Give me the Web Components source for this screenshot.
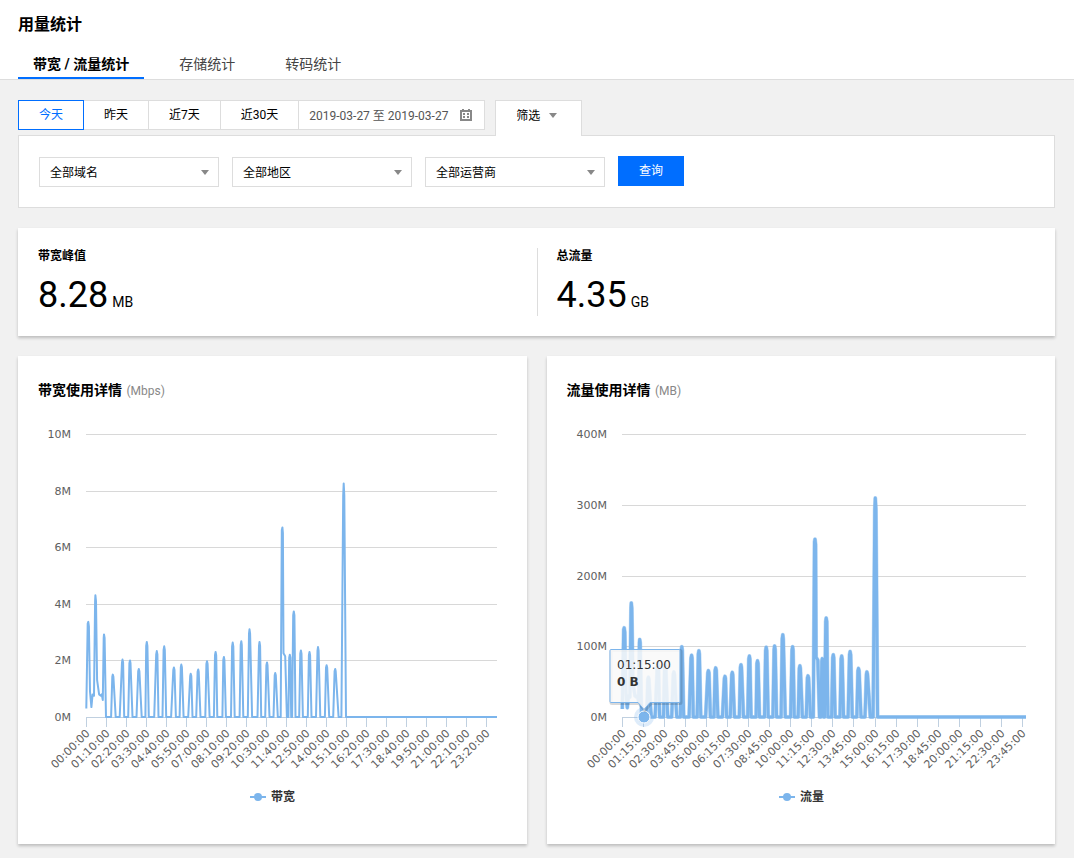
<!DOCTYPE html>
<html lang="zh-CN">
<head>
<meta charset="utf-8">
<meta name="viewport" content="width=device-width, initial-scale=1">
<title>用量统计</title>
<style>
  body {
    margin: 0;
    background: #f1f1f1;
    color: #000;
    font: 12px/20px Roboto, "Noto Sans CJK SC", sans-serif;
  }
</style>
</head>
<body>
<usage-page></usage-page>

<script>
const define = (name, html, setup) => {
  const template = document.createElement('template');
  template.innerHTML = html;
  customElements.define(name, class extends HTMLElement {
    connectedCallback() {
      if (this.shadowRoot) return;
      this.attachShadow({ mode: 'open' }).append(template.content.cloneNode(true));
      if (setup) setup(this, this.shadowRoot);
    }
  });
};

define('page-header', `
  <style>
    :host { display: block; background: #fff; border-bottom: 1px solid #ddd; padding: 13px 18px 0; }
    h1 { margin: 0 0 12px; font-size: 16px; line-height: 24px; font-weight: 700; }
    nav { display: flex; gap: 20px; }
  </style>
  <h1><slot name="title"></slot></h1>
  <nav><slot></slot></nav>
`);

define('nav-tab', `
  <style>
    :host { display: block; }
    a { display: block; box-sizing: border-box; height: 30px; padding: 0 15px; font-size: 14px; line-height: 30px;
        color: #444; text-decoration: none; white-space: nowrap; }
    :host([active]) a { color: #000; font-weight: 700; border-bottom: 2px solid #006eff; }
  </style>
  <a href="#"><slot></slot></a>
`);

define('range-button', `
  <style>
    :host { display: block; }
    button { height: 30px; padding: 0 20px; border: 1px solid #ddd; border-left-width: 0; background: #fff;
             color: #000; font: inherit; white-space: nowrap; display: block; }
    :host([active]) button { border: 1px solid #006eff; color: #006eff; }
  </style>
  <button type="button"><slot></slot></button>
`);

define('date-range', `
  <style>
    :host { display: block; }
    label { display: flex; align-items: center; box-sizing: border-box; width: 186px; height: 30px;
            padding: 0 12px 0 10px; border: 1px solid #ddd; border-left: 0; background: #fff; }
    input { flex: 1; min-width: 0; height: 28px; box-sizing: border-box; padding: 0 0 2px; border: 0; outline: 0; background: none; color: #555; font: inherit; }
    svg { flex: none; display: block; }
  </style>
  <label>
    <input type="text" readonly aria-label="日期范围" value="2019-03-27 至 2019-03-27">
    <svg width="12" height="12" viewBox="0 0 12 12" fill="#888" aria-hidden="true">
      <path fill-rule="evenodd" d="M0 1H2V0H4V1H8V0H10V1H12V12H0ZM2 3V10H10V3Z"/>
      <path d="M3 4h2v2H3zM7 4h2v2H7zM3 7h2v2H3zM7 7h2v2H7z"/>
    </svg>
  </label>
`);

define('filter-tab', `
  <style>
    :host { display: block; position: relative; z-index: 1; }
    button { display: flex; align-items: center; gap: 9px; box-sizing: border-box; width: 87px; height: 36px;
             padding: 0 0 6px 20px; border: 1px solid #ddd; border-bottom: 0; background: #fff; color: #000; font: inherit; }
    svg { display: block; }
  </style>
  <button type="button" aria-expanded="true"><slot></slot>
    <svg width="8" height="5" viewBox="0 0 8 5" aria-hidden="true"><path d="M0 0h8L4 5z" fill="#888"/></svg>
  </button>
`);

define('select-box', `
  <style>
    :host { display: block; position: relative; flex: 0 1 180px; }
    select { appearance: none; display: block; box-sizing: border-box; width: 100%; height: 30px; padding: 2px 24px 0 10px;
             border: 1px solid #ddd; border-radius: 0; background: #fff; color: #000; font: inherit; }
    svg { position: absolute; right: 10px; top: 13px; pointer-events: none; }
  </style>
  <select><option></option></select>
  <svg width="8" height="5" viewBox="0 0 8 5" aria-hidden="true"><path d="M0 0h8L4 5z" fill="#888"/></svg>
`, (host, root) => {
  root.querySelector('option').textContent = host.getAttribute('value');
  root.querySelector('select').setAttribute('aria-label', host.getAttribute('label'));
});

define('filter-panel', `
  <style>
    :host { display: block; }
    .bar { display: flex; align-items: flex-start; }
    filter-tab { margin-left: 10px; }
    form { display: flex; align-items: flex-start; gap: 13px; margin-top: -1px; padding: 20px; border: 1px solid #ddd; background: #fff; }
    select-box { margin-top: 1px; }
    .query { height: 30px; padding: 0 21px; border: 0; background: #006eff; color: #fff; font: inherit; white-space: nowrap; }
  </style>
  <div class="bar">
    <range-button active>今天</range-button>
    <range-button>昨天</range-button>
    <range-button>近7天</range-button>
    <range-button>近30天</range-button>
    <date-range></date-range>
    <filter-tab>筛选</filter-tab>
  </div>
  <form>
    <select-box label="域名" value="全部域名"></select-box>
    <select-box label="地区" value="全部地区"></select-box>
    <select-box label="运营商" value="全部运营商"></select-box>
    <button class="query" type="button">查询</button>
  </form>
`);

define('stat-card', `
  <style>
    :host { display: flex; padding: 20px 0; background: #fff; box-shadow: 0 2px 3px rgba(0,0,0,.22); }
  </style>
  <slot></slot>
`);

define('stat-item', `
  <style>
    :host { display: block; box-sizing: border-box; width: 50%; height: 68px; padding-left: 20px; }
    :host(:not(:first-child)) { border-left: 1px solid #ddd; padding-left: 19px; }
    h2 { margin: 0; font-size: 12px; line-height: 16px; }
    p { display: flex; align-items: baseline; gap: 4px; margin: 10px 0 0; font-size: 36px; line-height: 42px; }
    small { font-size: 14px; }
  </style>
  <h2><slot></slot></h2>
  <p><span><slot name="value"></slot></span><small><slot name="unit"></slot></small></p>
`);

define('chart-card', `
  <style>
    :host { display: block; min-width: 0; padding: 20px; background: #fff; box-shadow: 0 2px 3px rgba(0,0,0,.22); }
    h3 { margin: 4px 0 13px; font-size: 14px; line-height: 21px; font-weight: 700; }
    small { margin-left: 1px; font-size: 12px; font-weight: 400; color: #888; }
  </style>
  <h3><slot name="title"></slot> <small><slot name="unit"></slot></small></h3>
  <slot></slot>
`);

/* [minute of the day, bandwidth in Mbps] for the opening burst. */
const OPENING = [[0, .3], [5, 3.3], [7, 3.36], [9, 3.2], [13, .9], [18, .35], [22, .8], [27, .75], [31, 4.1], [32, 4.3],
  [34, 4.1], [38, 1.3], [45, .8], [51, .75], [54, .8], [58, .6], [61, 2.8], [62, 2.92], [64, 2.8], [69, 0]];
/* [minute, peak, minutes of rise, minutes of fall] */
const PEAKS = [[93, 1.5, 6, 10], [127, 2.03, 10, 6], [153, 2, 6, 9], [184, 1.7, 8, 10], [212, 2.65, 5, 7], [247, 2.33, 9, 6],
  [273, 2.5, 6, 7], [307, 1.75, 10, 7], [333, 1.85, 6, 8], [366, 1.53, 9, 6], [392, 1.68, 7, 8], [423, 1.97, 6, 9],
  [453, 2.3, 6, 6], [482, 2.12, 5, 7], [513, 2.63, 6, 7], [543, 2.68, 6, 7], [572, 3.1, 6, 9], [607, 2.65, 7, 6],
  [633, 1.93, 6, 9], [662, 1.55, 6, 9]];
const MIDDAY = [[681, 0], [685, 6.6], [687, 6.7], [689, 6.5], [691, 2.25], [697, 2.15], [703, 0], [708, 0], [711, 2.1],
  [713, 2.2], [715, 2.1], [718, 0], [721, 0], [725, 3.6], [727, 3.73], [729, 3.6], [733, 0]];
const LATE = [[752, 2.35, 6, 7], [782, 2.3, 6, 7], [812, 2.47, 7, 8], [842, 1.83, 6, 9], [872, 1.7, 7, 12], [902, 8.25, 8, 8]];
const spread = list => list.flatMap(([t, v, rise, fall]) => [[t - rise, 0], [t - 2, v * .95], [t, v], [t + 2, v * .95], [t + fall, 0]]);
const SERIES = [...OPENING, ...spread(PEAKS), ...MIDDAY, ...spread(LATE), [1440, 0]];
const clock = m => `${String(Math.floor(m / 60)).padStart(2, '0')}:${String(m % 60).padStart(2, '0')}:00`;

define('line-chart', `
  <style>
    :host { display: block; height: 410px; }
    svg { display: block; width: 100%; height: 400px; overflow: visible;
          font: 11px "DejaVu Sans", "Noto Sans CJK SC", sans-serif; }
  </style>
  <svg role="img"></svg>
`, (host, root) => {
  const num = name => Number(host.getAttribute(name));
  const svg = root.querySelector('svg');
  const draw = () => {
    const width = host.clientWidth;
    const left = num('inset'), right = width - 10, top = 20, base = 303;
    const max = num('max'), step = num('step'), factor = num('factor'), every = num('every');
    const x = m => left + m / 1440 * (right - left);
    const y = v => base - v / max * (base - top);
    let out = '';
    for (let v = 0; v <= max; v += step) {
      const line = Math.round(base - v / max * (base - top)) + .5;
      out += `<path d="M${left} ${line}H${right}" stroke="${v ? '#d8d8d8' : '#c0d0e0'}"/>
        <text x="${left - 15}" y="${Math.round(line + 3)}" text-anchor="end" fill="#606060">${v}M</text>`;
    }
    for (let m = 0; m < 1440; m += every) {
      const tick = Math.round(x(m)) + .5;
      out += `<path d="M${tick} ${base}v10" stroke="#c0d0e0"/>
        <text transform="translate(${tick + 4} ${base + 17}) rotate(-45)" text-anchor="end" fill="#606060">${clock(m)}</text>`;
    }
    const points = SERIES.map(([m, v]) => `${x(m + 1).toFixed(1)} ${y(v * factor).toFixed(1)}`);
    points[points.length - 1] = `${right} ${y(0)}`;
    const d = 'M' + points.join('L');
    const hover = host.hasAttribute('hover');
    if (hover) out += `<path d="${d}" fill="none" stroke="#7cb5ec" stroke-opacity=".5" stroke-width="4" stroke-linejoin="round"/>`;
    out += `<path d="${d}" fill="none" stroke="#7cb5ec" stroke-width="${hover ? 3 : 2}" stroke-linejoin="round"/>`;
    const mid = Math.round(width / 2);
    out += `<path d="M${mid - 23} 383h16" stroke="#7cb5ec" stroke-width="2"/><circle cx="${mid - 15}" cy="383" r="4" fill="#7cb5ec"/>
      <text x="${mid - 2}" y="387" font-size="12" font-weight="700" fill="#333">${host.getAttribute('name')}</text>`;
    if (hover) {
      const hx = Math.round(x(num('hover'))) + 1;
      const box = `M${hx - 33} 235.500h68q1 0 1 1v51q0 1-1 1h-29l-6 7l-6-7h-27q-1 0-1-1v-51q0-1 1-1z`;
      out += `<circle cx="${hx}" cy="303" r="10" fill="#7cb5ec" fill-opacity=".25"/>
        <circle cx="${hx}" cy="303" r="6" fill="#7cb5ec" stroke="#fff"/>
        <path d="${box}" transform="translate(1 1)" fill="none" stroke="#000" stroke-opacity=".15" stroke-width="3"/>
        <path d="${box}" fill="#f9f9f9" fill-opacity=".85" stroke="#7cb5ec"/>
        <text x="${hx - 27}" y="255" font-size="12" fill="#333">${clock(num('hover'))}</text>
        <text x="${hx - 27}" y="272" font-size="12" font-weight="700" fill="#333">0 B</text>`;
    }
    svg.innerHTML = out;
    svg.setAttribute('aria-label', host.getAttribute('name'));
  };
  draw();
  new ResizeObserver(draw).observe(host);
});

define('usage-page', `
  <style>
    :host { display: block; }
    main { display: grid; gap: 20px; padding: 20px 19px 14px 18px; }
    .charts { display: grid; grid-template-columns: repeat(2, minmax(0, 1fr)); gap: 20px; }
    chart-card { box-sizing: border-box; }
    line-chart { margin-top: -1px; }
  </style>
  <page-header>
    <span slot="title">用量统计</span>
    <nav-tab active>带宽 / 流量统计</nav-tab>
    <nav-tab>存储统计</nav-tab>
    <nav-tab>转码统计</nav-tab>
  </page-header>
  <main>
    <filter-panel></filter-panel>
    <stat-card>
      <stat-item>带宽峰值<span slot="value">8.28</span><span slot="unit">MB</span></stat-item>
      <stat-item>总流量<span slot="value">4.35</span><span slot="unit">GB</span></stat-item>
    </stat-card>
    <div class="charts">
      <chart-card>
        <span slot="title">带宽使用详情</span><span slot="unit">(Mbps)</span>
        <line-chart name="带宽" inset="48" max="10" step="2" factor="1" every="70"></line-chart>
      </chart-card>
      <chart-card>
        <span slot="title">流量使用详情</span><span slot="unit">(MB)</span>
        <line-chart name="流量" inset="55" max="400" step="100" factor="37.5" every="75" hover="75"></line-chart>
      </chart-card>
    </div>
  </main>
`);
</script>
</body>
</html>
